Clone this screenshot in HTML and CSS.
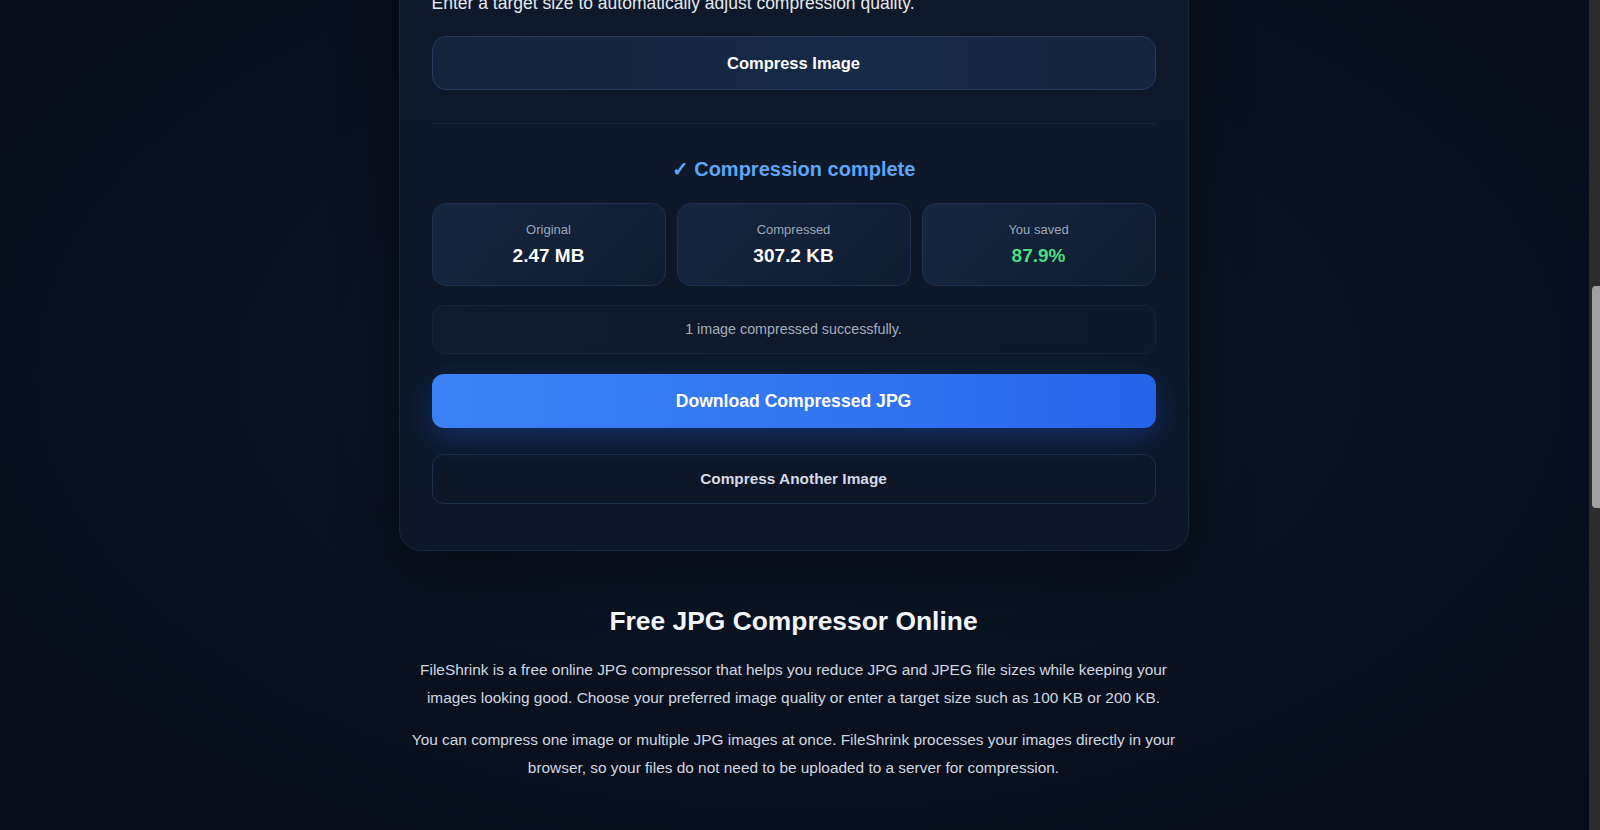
FILE: index.html
```html
<!DOCTYPE html>
<html lang="en">

<head>
    <meta charset="UTF-8">
    <meta name="viewport" content="width=device-width, initial-scale=1.0">
    <title>Free JPG Compressor Online - FileShrink</title>
    <link rel="stylesheet" href="styles.css">
</head>

<body>
    <div class="viewport">
        <main class="page">
            <section class="tool-card">
                <p class="hint">Enter a target size to automatically adjust compression quality.</p>
                <button class="btn btn-compress">Compress Image</button>

                <div class="divider"></div>

                <h2 class="result-title">&#10003; Compression complete</h2>

                <div class="stats">
                    <div class="stat">
                        <span class="stat-label">Original</span>
                        <span class="stat-value">2.47 MB</span>
                    </div>
                    <div class="stat">
                        <span class="stat-label">Compressed</span>
                        <span class="stat-value">307.2 KB</span>
                    </div>
                    <div class="stat">
                        <span class="stat-label">You saved</span>
                        <span class="stat-value saved">87.9%</span>
                    </div>
                </div>

                <div class="status">1 image compressed successfully.</div>

                <button class="btn btn-download">Download Compressed JPG</button>
                <button class="btn btn-again">Compress Another Image</button>
            </section>

            <section class="about">
                <h1>Free JPG Compressor Online</h1>
                <p>FileShrink is a free online JPG compressor that helps you reduce JPG and JPEG file sizes while keeping your images looking good. Choose your preferred image quality or enter a target size such as 100 KB or 200 KB.</p>
                <p>You can compress one image or multiple JPG images at once. FileShrink processes your images directly in your browser, so your files do not need to be uploaded to a server for compression.</p>
            </section>
        </main>
    </div>

    <!-- window scrollbar -->
    <div class="scrollbar">
        <div class="scrollbar-thumb"></div>
    </div>
</body>

</html>
```

FILE: styles.css
```css
body,
html {
    height: 100%;
    margin: 0;
    overflow: hidden;
    font-family: "Liberation Sans", Arial, sans-serif;
}

body {
    background-color: #08101d;
    background-image: radial-gradient(ellipse at 50% 45%, #0d1828 0%, #09111f 55%, #070d18 100%);
    color: #e2e8f0;
}

.viewport {
    height: 100%;
    margin-right: 13px;
    overflow: hidden;
}

.page {
    width: 790px;
    margin: -42px auto 0;
}

.tool-card {
    display: flex;
    flex-direction: column;
    padding: 32px 32px 46px;
    background: linear-gradient(180deg, #0e192b 0%, #0c1627 100%);
    border: 1px solid #18263c;
    border-radius: 22px;
    box-shadow: 0 20px 60px rgba(0, 0, 0, 0.45);
}

.hint {
    margin: 0;
    font-size: 17.5px;
    line-height: 24px;
    color: #e5e9ef;
}

.btn {
    width: 100%;
    border-radius: 12px;
    font-family: inherit;
    font-weight: bold;
    cursor: pointer;
}

.btn-compress {
    margin-top: 21px;
    height: 54px;
    border: 1px solid #213a5e;
    border-radius: 14px;
    background: linear-gradient(90deg, #13233c 0%, #172a47 60%, #14243e 100%);
    color: #ffffff;
    font-size: 16.5px;
}

.divider {
    margin-top: 33px;
    border-top: 1px solid #16253a;
}

.result-title {
    margin: 33px 0 0;
    font-size: 20px;
    line-height: 24px;
    text-align: center;
    color: #5ea5f8;
}

.stats {
    display: grid;
    grid-template-columns: repeat(3, 1fr);
    gap: 11px;
    margin-top: 22px;
}

.stat {
    display: flex;
    flex-direction: column;
    align-items: center;
    gap: 5px;
    padding: 17px 0 17px;
    background: linear-gradient(135deg, #15263f 0%, #0f1d32 100%);
    border: 1px solid #1c3050;
    border-radius: 14px;
}

.stat-label {
    font-size: 13px;
    line-height: 18px;
    color: #9aa7b8;
}

.stat-value {
    font-size: 19px;
    line-height: 24px;
    font-weight: bold;
    color: #ffffff;
}

.stat-value.saved {
    color: #4ade80;
}

.status {
    margin-top: 19px;
    height: 47px;
    line-height: 47px;
    text-align: center;
    font-size: 14.3px;
    color: #a3aebd;
    background: linear-gradient(90deg, #0f1b2e 0%, #0d1829 100%);
    border: 1px solid #16243a;
    border-radius: 12px;
}

.btn-download {
    margin-top: 20px;
    height: 54px;
    border: none;
    background: linear-gradient(90deg, #3b82f6 0%, #3176f0 55%, #2663e9 100%);
    color: #ffffff;
    font-size: 17.6px;
    box-shadow: 0 10px 32px rgba(37, 99, 235, 0.32);
}

.btn-again {
    margin-top: 26px;
    height: 50px;
    border: 1px solid #1b2e4a;
    background: transparent;
    color: #d5dbe4;
    font-size: 15.4px;
}

.about {
    margin-top: 54px;
    text-align: center;
}

.about h1 {
    margin: 0;
    font-size: 26.4px;
    line-height: 32px;
    color: #f1f5f9;
}

.about p {
    margin: 19px 0 0;
    font-size: 15.4px;
    line-height: 28px;
    color: #d0d7e1;
}

.about p + p {
    margin-top: 14px;
}

.scrollbar {
    position: fixed;
    top: 0;
    right: 0;
    width: 11px;
    height: 100%;
    background-color: #2c2c2c;
}

.scrollbar-thumb {
    position: absolute;
    top: 286px;
    left: 3px;
    right: 0;
    height: 222px;
    background-color: #a1a1a1;
    border-radius: 4px 0 0 4px;
}
```
